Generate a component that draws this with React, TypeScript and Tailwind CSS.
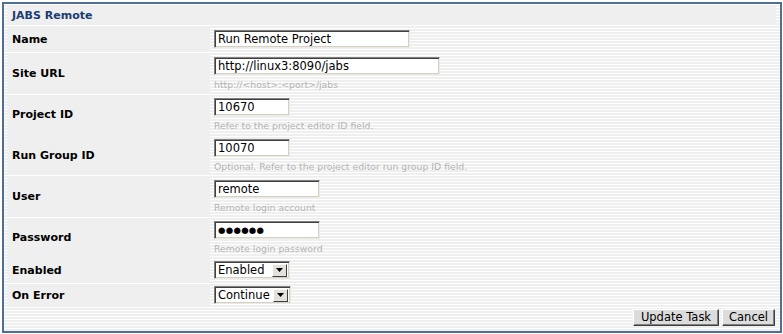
import React from "react"

const inset =
    "border border-t-[#808080] border-l-[#808080] border-r-[#ece9e0] border-b-[#ece9e0] shadow-[inset_1px_1px_0_#404040,inset_-1px_-1px_0_#d4d0c8] bg-white"

const rows = [
    { label: "Name", value: "Run Remote Project", w: "w-[196px]" },
    { label: "Site URL", value: "http://linux3:8090/jabs", w: "w-[226px]", hint: "http://<host>:<port>/jabs" },
    { label: "Project ID", value: "10670", w: "w-[76px]", hint: "Refer to the project editor ID field." },
    { label: "Run Group ID", value: "10070", w: "w-[76px]", hint: "Optional. Refer to the project editor run group ID field." },
    { label: "User", value: "remote", w: "w-[106px]", hint: "Remote login account" },
    { label: "Password", value: "●●●●●●", w: "w-[106px]", hint: "Remote login password", pw: true },
]

const selects = [
    { label: "Enabled", value: "Enabled", w: "w-[76px]" },
    { label: "On Error", value: "Continue", w: "w-[77px]" },
]

function Label({ text }: { text: string }) {
    return (
        <div className="w-[203px] shrink-0 bg-[#efefef] flex items-center pl-[5px] pt-[2px] font-bold text-[11px] text-black">
            {text}
        </div>
    )
}

export default function App() {
    return (
        <div className="w-[783px] h-[334px] bg-white p-[2px] font-['DejaVu_Sans',Verdana,sans-serif]">
            <div className="w-[780px] h-[331px] border-2 border-[#4f6f96] p-[3px] pr-[4px] bg-[repeating-linear-gradient(to_bottom,#ffffff_0px,#ffffff_1px,#efefef_1px,#efefef_3px)]">
                <div className="flex flex-col gap-[2px]">

                    {/* header */}
                    <div className="h-[18px] bg-[#efefef] flex items-center pl-[5px] font-bold text-[11px] text-[#1a3d73]">
                        JABS Remote
                    </div>

                    {/* text fields */}
                    {rows.map((r) => (
                        <div key={r.label} className={`flex gap-[2px] ${r.hint ? "h-[39px]" : "h-[25px]"}`}>
                            <Label text={r.label} />
                            <div className="pl-[2px] pt-[3px] flex flex-col">
                                <div className={`${r.w} h-[18px] ${inset} flex items-center pl-[3px] pt-[1px] text-black ${r.pw ? "text-[8.5px] tracking-[0.3px]" : "text-[11.5px]"}`}>
                                    {r.value}
                                </div>
                                {r.hint && (
                                    <div className="mt-[4px] text-[9.3px] leading-[11px] text-[#b4b4b4]">{r.hint}</div>
                                )}
                            </div>
                        </div>
                    ))}

                    {/* selects */}
                    {selects.map((s) => (
                        <div key={s.label} className="flex gap-[2px] h-[23px]">
                            <Label text={s.label} />
                            <div className="pl-[2px] pt-[2px]">
                                <div className={`${s.w} h-[18px] ${inset} flex items-center justify-between pl-[3px] pr-[2px] text-[11.5px] text-black`}>
                                    <span className="pt-[1px]">{s.value}</span>
                                    <span className="w-[15px] h-[13px] bg-[#e4e1da] border border-t-white border-l-white border-r-[#404040] border-b-[#404040] flex items-center justify-center">
                                        <svg width="7" height="4" viewBox="0 0 7 4">
                                            <path d="M0 0h7L3.5 4z" fill="#000" />
                                        </svg>
                                    </span>
                                </div>
                            </div>
                        </div>
                    ))}

                    {/* buttons */}
                    <div className="flex justify-end gap-[3px] pr-[1px]">
                        <button className="h-[17px] px-[7px] bg-[#dcdcdc] border border-t-white border-l-white border-r-[#404040] border-b-[#404040] shadow-[inset_-1px_-1px_0_#808080] text-[11.5px] leading-none text-black">
                            Update Task
                        </button>
                        <button className="h-[17px] px-[6px] bg-[#dcdcdc] border border-t-white border-l-white border-r-[#404040] border-b-[#404040] shadow-[inset_-1px_-1px_0_#808080] text-[11.5px] leading-none text-black">
                            Cancel
                        </button>
                    </div>
                </div>
            </div>
        </div>
    )
}
